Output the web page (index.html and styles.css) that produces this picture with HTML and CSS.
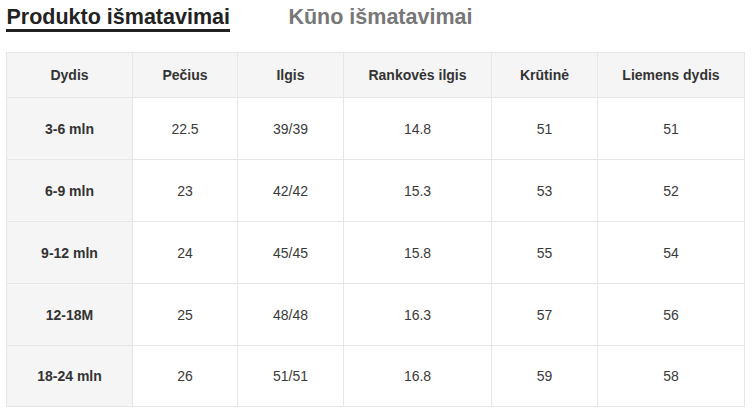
FILE: index.html
```html
<!DOCTYPE html>
<html lang="lt">
<head>
<meta charset="utf-8">
<link rel="stylesheet" href="styles.css">
</head>
<body>
<div class="page">
  <div class="tabs">
    <div class="tab active">Produkto išmatavimai</div>
    <div class="tab">Kūno išmatavimai</div>
  </div>
  <table class="size-table">
    <colgroup>
      <col class="c1"><col class="c2"><col class="c3"><col class="c4"><col class="c5"><col class="c6">
    </colgroup>
    <thead>
      <tr><th>Dydis</th><th>Pečius</th><th>Ilgis</th><th>Rankovės ilgis</th><th>Krūtinė</th><th>Liemens dydis</th></tr>
    </thead>
    <tbody>
      <tr><th>3-6 mln</th><td>22.5</td><td>39/39</td><td>14.8</td><td>51</td><td>51</td></tr>
      <tr><th>6-9 mln</th><td>23</td><td>42/42</td><td>15.3</td><td>53</td><td>52</td></tr>
      <tr><th>9-12 mln</th><td>24</td><td>45/45</td><td>15.8</td><td>55</td><td>54</td></tr>
      <tr><th>12-18M</th><td>25</td><td>48/48</td><td>16.3</td><td>57</td><td>56</td></tr>
      <tr><th>18-24 mln</th><td>26</td><td>51/51</td><td>16.8</td><td>59</td><td>58</td></tr>
    </tbody>
  </table>
</div>
</body>
</html>
```
FILE: styles.css
```css
html, body {
  margin: 0;
  padding: 0;
  background: #ffffff;
}
.page {
  padding: 5px 0 0 6px;
  font-family: "Liberation Sans", Arial, sans-serif;
}
.tabs {
  display: flex;
  gap: 58px;
}
.tab {
  font-size: 21.5px;
  font-weight: bold;
  line-height: 24px;
  color: #777777;
  padding: 0 0 0 0.5px;
  border-bottom: 3px solid transparent;
}
.tab.active {
  color: #222222;
  border-bottom-color: #222222;
}
.size-table {
  margin-top: 20px;
  table-layout: fixed;
  width: 739px;
  border-collapse: separate;
  border-spacing: 1px;
  background: #e6e6e6;
  font-size: 14px;
  color: #333333;
}
.c1 { width: 125px; }
.c2 { width: 104px; }
.c3 { width: 105px; }
.c4 { width: 147px; }
.c5 { width: 105px; }
.c6 { width: 146px; }
.size-table th,
.size-table td {
  padding: 0;
  text-align: center;
  vertical-align: middle;
  height: 61px;
  background: #ffffff;
}
.size-table thead th {
  height: 44px;
  background: #f5f5f5;
  font-weight: bold;
}
.size-table tbody th {
  background: #f5f5f5;
  font-weight: bold;
}
.size-table tbody tr:last-child th,
.size-table tbody tr:last-child td {
  height: 60px;
}
.size-table td {
  font-weight: normal;
  color: #3a3a3a;
}
```
